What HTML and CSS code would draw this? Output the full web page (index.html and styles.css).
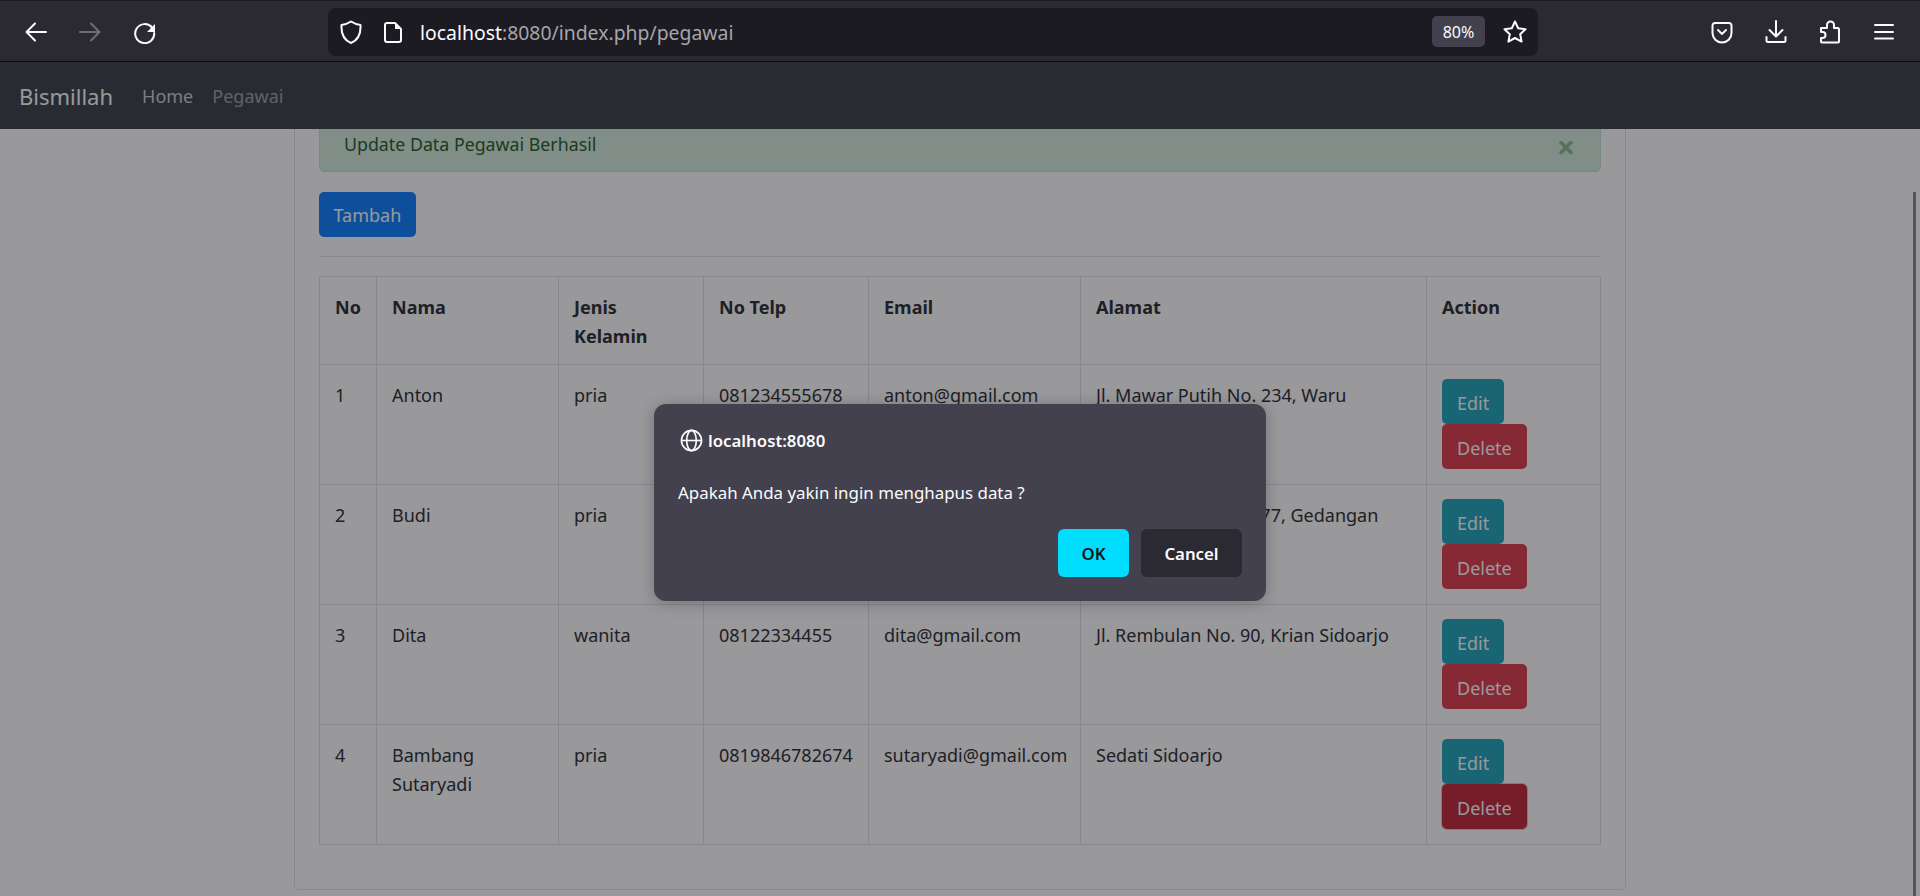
FILE: index.html
```html
<!DOCTYPE html>
<html lang="id">
<head>
<meta charset="utf-8">
<title>Pegawai</title>
<link rel="stylesheet" href="styles.css">
</head>
<body>
<header class="toolbar">
  <nav class="tool-group left">
    <svg class="icon" viewBox="0 0 24 24"><path d="M22 12H2.500M11 3.500 2.500 12l8.500 8.500"/></svg>
    <svg class="icon dim" viewBox="0 0 24 24"><path d="M2 12h19.500M13 3.500l8.500 8.500-8.500 8.500"/></svg>
    <svg class="icon" viewBox="0 0 24 24"><path d="M20 7.500A9.500 9.500 0 1 0 22.200 13"/><path class="fill" d="M23 4v8h-8z"/></svg>
  </nav>
  <div class="urlbar">
    <svg class="icon shield" viewBox="0 0 24 24"><path d="M12 1.500c3 2 6 3 9.500 3.500.5 9-2 15-9.500 18C4.500 20 2 14 2.500 5 6 4.500 9 3.500 12 1.500z"/></svg>
    <svg class="icon page" viewBox="0 0 24 24"><path d="M6 3h8l6 6v11a2 2 0 0 1-2 2H6a2 2 0 0 1-2-2V5a2 2 0 0 1 2-2z"/><path class="fill" d="M14 3l6 6h-6z"/></svg>
    <span class="url"><span class="host">localhost</span>:8080/index.php/pegawai</span>
    <span class="zoom-badge">80%</span>
    <svg class="icon star" viewBox="0 0 24 24"><path d="M12 1.500l3.200 6.800 7.300.9-5.300 5.100 1.400 7.300L12 18l-6.600 3.600 1.400-7.300L1.500 9.200l7.300-.9z"/></svg>
  </div>
  <nav class="tool-group right">
    <svg class="icon" viewBox="0 0 24 24"><path d="M5 3h14a2.500 2.500 0 0 1 2.500 2.500V13a9.500 9.500 0 0 1-19 0V5.500A2.500 2.500 0 0 1 5 3z"/><path d="M8 10l4 4 4-4"/></svg>
    <svg class="icon" viewBox="0 0 24 24"><path d="M12 1v15.500M5.500 10l6.500 6.500 6.500-6.500M2.500 17v3.500A1.500 1.500 0 0 0 4 22h16a1.500 1.500 0 0 0 1.500-1.500V17"/></svg>
    <svg class="icon" viewBox="0 0 24 24"><path d="M3 8h6V5a3.500 3.500 0 0 1 7 0v3h3.500A1.500 1.500 0 0 1 21 9.500v12a1 1 0 0 1-1 1H4a1 1 0 0 1-1-1V18h1.500a3 3 0 0 0 0-6H3z"/></svg>
    <svg class="icon" viewBox="0 0 24 24"><path d="M3 5h18M3 12h18M3 18.500h18"/></svg>
  </nav>
</header>

<div class="viewport">
  <div class="navbar">
    <a class="brand">Bismillah</a>
    <a class="nav-link home">Home</a>
    <a class="nav-link muted">Pegawai</a>
  </div>
  <main class="page-body">
    <section class="card">
      <div class="alert">
        <span>Update Data Pegawai Berhasil</span>
        <span class="close">×</span>
      </div>
      <a class="btn primary">Tambah</a>
      <hr class="rule">
      <table class="data">
        <colgroup>
          <col class="c-no"><col class="c-nama"><col class="c-jk"><col class="c-telp"><col class="c-email"><col class="c-alamat"><col class="c-action">
        </colgroup>
        <thead>
          <tr><th>No</th><th>Nama</th><th>Jenis Kelamin</th><th>No Telp</th><th>Email</th><th>Alamat</th><th>Action</th></tr>
        </thead>
        <tbody>
          <tr><td>1</td><td>Anton</td><td>pria</td><td>081234555678</td><td>anton@gmail.com</td><td>Jl. Mawar Putih No. 234, Waru</td><td><a class="btn info">Edit</a><a class="btn danger">Delete</a></td></tr>
          <tr><td>2</td><td>Budi</td><td>pria</td><td>081298765432</td><td>budi@gmail.com</td><td>Jl. Melati Indah No. 77, Gedangan</td><td><a class="btn info">Edit</a><a class="btn danger">Delete</a></td></tr>
          <tr><td>3</td><td>Dita</td><td>wanita</td><td>08122334455</td><td>dita@gmail.com</td><td>Jl. Rembulan No. 90, Krian Sidoarjo</td><td><a class="btn info">Edit</a><a class="btn danger">Delete</a></td></tr>
          <tr><td>4</td><td>Bambang Sutaryadi</td><td>pria</td><td>0819846782674</td><td>sutaryadi@gmail.com</td><td>Sedati Sidoarjo</td><td><a class="btn info">Edit</a><a class="btn danger active">Delete</a></td></tr>
        </tbody>
      </table>
    </section>
  </main>
  <div class="overlay">
    <div class="dialog">
      <div class="dialog-title">
        <svg class="globe" viewBox="0 0 24 24"><circle cx="12" cy="12" r="10.500"/><ellipse cx="12" cy="12" rx="5" ry="10.500"/><path d="M1.500 12h21"/></svg>
        <span>localhost:8080</span>
      </div>
      <p class="dialog-msg">Apakah Anda yakin ingin menghapus data ?</p>
      <div class="dialog-actions">
        <button class="dlg-btn ok">OK</button>
        <button class="dlg-btn cancel">Cancel</button>
      </div>
    </div>
  </div>
  <div class="scroll-thumb"></div>
</div>
</body>
</html>
```

FILE: styles.css
```css
* { box-sizing: border-box; }
html, body { margin: 0; padding: 0; height: 100%; }
body {
  display: flex;
  flex-direction: column;
  height: 896px;
  overflow: hidden;
  background: #fff;
  color: #212529;
  font-family: "Noto Sans", "Open Sans", sans-serif;
}

/* browser chrome */
.toolbar {
  flex: 0 0 62px;
  display: flex;
  align-items: center;
  padding: 1px 24px 0;
  background: #2b2a33;
  border-top: 1px solid #1c1b22;
  border-bottom: 1px solid #0c0c0d;
}
.tool-group { display: flex; gap: 30px; }
.tool-group.right { margin-left: auto; }
.icon {
  display: block;
  flex: none;
  width: 24px;
  height: 24px;
  fill: none;
  stroke: #fbfbfe;
  stroke-width: 2;
  stroke-linecap: round;
  stroke-linejoin: round;
}
.icon .fill { fill: #fbfbfe; stroke: none; }
.icon.dim { stroke: #6f6e75; }
.urlbar {
  display: flex;
  align-items: center;
  width: 1210px;
  height: 48px;
  margin-left: 172px;
  padding: 0 11px;
  border-radius: 8px;
  background: #1c1b22;
}
.shield { margin-right: 18px; }
.url {
  margin: 2px 0 0 15px;
  font-size: 19.400px;
  color: #a5a5aa;
  white-space: nowrap;
}
.host { color: #fbfbfe; }
.zoom-badge {
  display: flex;
  align-items: center;
  justify-content: center;
  width: 53px;
  height: 31px;
  margin-left: auto;
  border-radius: 5px;
  background: #42414d;
  color: #fbfbfe;
  font-size: 16px;
}
.star { margin-left: 18px; }

/* page */
.viewport { position: relative; flex: 1; overflow: hidden; }
.navbar {
  position: relative;
  z-index: 1;
  display: flex;
  align-items: center;
  height: 67px;
  padding: 0 19px;
  background: #343a40;
}
.brand { color: #fff; font-size: 22px; margin-right: 29px; }
.nav-link { font-size: 18px; margin-right: 19px; }
.home { color: rgba(255,255,255,.75); }
.muted { color: rgba(255,255,255,.5); }
.page-body { padding: 0 294px; }
.card {
  width: 1332px;
  margin-top: -40px;
  padding: 24px 24px 44px;
  background: #fff;
  border: 1px solid #dfdfdf;
  border-radius: 5px;
}
.alert {
  display: flex;
  justify-content: space-between;
  height: 58px;
  padding: 15px 24px 0;
  background: #d4edda;
  border: 1px solid #c3e6cb;
  border-radius: 5px;
  color: #155724;
  font-size: 17.800px;
  line-height: 29px;
}
.close {
  margin-right: 1px;
  color: #82b690;
  font-size: 32px;
  font-weight: 700;
  line-height: 34px;
}
.rule { height: 1px; margin: 19px 0; border: 0; background: #e5e5e5; }
.btn {
  display: block;
  width: fit-content;
  height: 45px;
  padding: 0 15px;
  border-radius: 5px;
  color: #fff;
  font-size: 18px;
  line-height: 48px;
}
.primary { margin-top: 20px; padding: 0 14.500px; background: #007bff; line-height: 46px; }
.info { margin-top: -2.500px; background: #17a2b8; }
.danger { background: #dc3545; }
.danger.active { background: #bd2130; box-shadow: 0 0 0 1px rgba(225,83,97,.4); }

.data {
  width: 1281px;
  border-collapse: collapse;
  table-layout: fixed;
  font-size: 18px;
  line-height: 29px;
}
.c-no { width: 57px; }
.c-nama { width: 182px; }
.c-jk { width: 145px; }
.c-telp { width: 165px; }
.c-email { width: 212px; }
.c-alamat { width: 346px; }
.c-action { width: 174px; }
.data th, .data td {
  padding: 16px 15px 13px;
  border: 1px solid #dee2e6;
  text-align: left;
  vertical-align: top;
}
.data th { height: 88px; font-weight: 700; }
.data td { height: 120px; }

/* dialog layer */
.overlay {
  position: absolute;
  inset: 0;
  z-index: 2;
  display: flex;
  justify-content: center;
  align-items: flex-start;
  padding-top: 342px;
  background: rgba(28,27,34,.45);
}
.dialog {
  width: 612px;
  height: 197px;
  padding: 24px;
  border-radius: 12px;
  background: #42414d;
  color: #fbfbfe;
  box-shadow: 0 2px 16px rgba(0,0,0,.25);
}
.dialog-title {
  display: flex;
  align-items: center;
  gap: 5px;
  height: 24px;
  margin-left: 2px;
  font-size: 16.800px;
  font-weight: 600;
}
.globe {
  width: 23px;
  height: 23px;
  fill: none;
  stroke: #fbfbfe;
  stroke-width: 1.700;
}
.dialog-msg { margin: 29px 0 0; font-size: 16.900px; line-height: 24px; }
.dialog-actions {
  display: flex;
  justify-content: flex-end;
  gap: 12px;
  margin-top: 24px;
}
.dlg-btn {
  height: 48px;
  padding: 0;
  border: 0;
  border-radius: 6px;
  font: 600 16.800px "Noto Sans", sans-serif;
}
.ok { width: 71px; background: #00ddff; color: #15141a; }
.cancel { width: 101px; background: #2b2a33; color: #fbfbfe; }
.scroll-thumb {
  position: absolute;
  z-index: 3;
  top: 130px;
  right: 4px;
  bottom: 0;
  width: 3px;
  background: #555558;
}
```
